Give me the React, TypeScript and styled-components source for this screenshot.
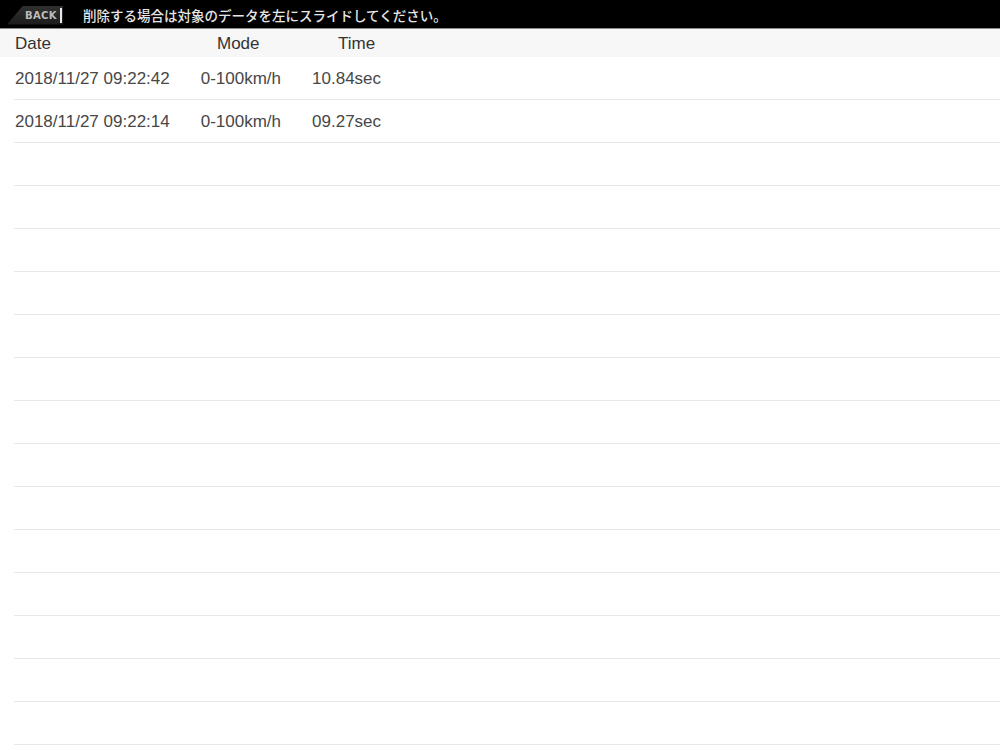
import styled, { createGlobalStyle } from "styled-components";

const GlobalStyle = createGlobalStyle`
  html, body {
    margin: 0;
    padding: 0;
    background: #ffffff;
    overflow: hidden;
  }
`;

const records = [
  { date: "2018/11/27 09:22:42", mode: "0-100km/h", time: "10.84sec" },
  { date: "2018/11/27 09:22:14", mode: "0-100km/h", time: "09.27sec" },
];

const EMPTY_ROWS = 15;

export default function App() {
  return (
    <>
      <GlobalStyle />
      <Screen>
        <TopBar>
          <BackButton>
            <span>BACK</span>
            <BackMark />
          </BackButton>
          <Notice>削除する場合は対象のデータを左にスライドしてください。</Notice>
        </TopBar>
        <HeaderRow>
          <HeaderCell $width={202}>Date</HeaderCell>
          <HeaderCell $width={121}>Mode</HeaderCell>
          <HeaderCell $width={60}>Time</HeaderCell>
        </HeaderRow>
        <List>
          {records.map((r, i) => (
            <Row key={i}>
              <Cell>{r.date}</Cell>
              <Cell>{r.mode}</Cell>
              <Cell>{r.time}</Cell>
            </Row>
          ))}
          {Array.from({ length: EMPTY_ROWS }).map((_, i) => (
            <Row key={"e" + i} />
          ))}
        </List>
      </Screen>
    </>
  );
}

const Screen = styled.div`
  width: 1000px;
  height: 750px;
  display: flex;
  flex-direction: column;
  overflow: hidden;
  font-family: "Liberation Sans", Arial, sans-serif;
`;

const TopBar = styled.div`
  height: 28px;
  background: #000;
  border-bottom: 1px solid #8a8a8a;
  display: flex;
  align-items: center;
  padding-left: 7px;
  gap: 20px;
  flex-shrink: 0;
`;

const BackButton = styled.div`
  width: 56px;
  height: 19px;
  margin-top: 2px;
  background: linear-gradient(#303030, #1c1c1c);
  clip-path: polygon(16px 0, 100% 0, 100% 100%, 0 100%);
  display: flex;
  align-items: center;
  justify-content: flex-end;
  gap: 3px;
  padding-right: 1px;
  box-sizing: border-box;
  color: #bdbdbd;
  font-family: "DejaVu Sans", sans-serif;
  font-weight: bold;
  font-size: 10px;
  letter-spacing: 0.4px;
`;

const BackMark = styled.span`
  width: 2px;
  height: 15px;
  background: #e8e8e8;
`;

const Notice = styled.div`
  color: #e6e6e6;
  font-family: "Noto Sans CJK JP", sans-serif;
  font-size: 13.5px;
  font-weight: 500;
  margin-top: 1px;
  white-space: nowrap;
`;

const HeaderRow = styled.div`
  height: 28px;
  background: #f7f7f7;
  display: flex;
  align-items: center;
  padding-left: 15px;
  flex-shrink: 0;
  color: #333;
  font-size: 17px;
`;

const HeaderCell = styled.div<{ $width: number }>`
  width: ${(p) => p.$width}px;
  padding-top: 1px;
`;

const List = styled.div`
  flex: 1;
  background: #fff;
`;

const Row = styled.div`
  height: 42px;
  margin-left: 14px;
  border-bottom: 1px solid #e8e8e8;
  display: flex;
  align-items: center;
  gap: 31px;
  padding-left: 1px;
  padding-top: 2px;
  box-sizing: border-box;
  height: 43px;
  color: #474747;
  font-size: 17px;
`;

const Cell = styled.div`
  white-space: nowrap;
`;
